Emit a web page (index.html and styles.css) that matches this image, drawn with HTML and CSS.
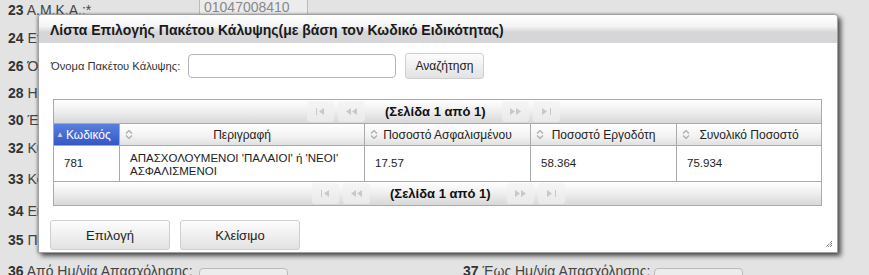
FILE: index.html
```html
<!DOCTYPE html>
<html lang="el">
<head>
    <meta charset="UTF-8">
    <title>Λίστα Επιλογής Πακέτου Κάλυψης</title>
    <link rel="stylesheet" href="styles.css">
</head>
<body>
    <div class="form">
        <div class="row r23"><span class="lbl"><b>23</b> Α.Μ.Κ.Α.:*</span><span class="field filled">01047008410</span></div>
        <div class="row r24"><span class="lbl"><b>24</b> Επώνυμο:</span></div>
        <div class="row r26"><span class="lbl"><b>26</b> Όνομα:</span></div>
        <div class="row r28"><span class="lbl"><b>28</b> Ημ/νία Γέννησης:</span></div>
        <div class="row r30"><span class="lbl"><b>30</b> Έγγραφο:</span></div>
        <div class="row r32"><span class="lbl"><b>32</b> Κύρια Ασφάλιση:</span></div>
        <div class="row r33"><span class="lbl"><b>33</b> Κατηγορία:</span></div>
        <div class="row r34"><span class="lbl"><b>34</b> Ειδικότητα:</span></div>
        <div class="row r35"><span class="lbl"><b>35</b> Πακέτο Κάλυψης:</span></div>
        <div class="row r36">
            <span class="lbl"><b>36</b> Από Ημ/νία Απασχόλησης:</span><span class="field small"></span>
            <span class="lbl second"><b>37</b> Έως Ημ/νία Απασχόλησης:</span><span class="field small"></span>
        </div>
    </div>

    <div class="dialog">
        <div class="dialog-title">Λίστα Επιλογής Πακέτου Κάλυψης(με βάση τον Κωδικό Ειδικότητας)</div>
        <div class="dialog-body">
            <div class="search">
                <label>Όνομα Πακέτου Κάλυψης:</label>
                <input type="text" class="search-input">
                <button class="btn btn-search">Αναζήτηση</button>
            </div>

            <div class="grid">
                <div class="pager top">
                    <span class="pg"><svg width="9" height="7" viewBox="0 0 9 7"><rect x="0" y="0" width="1" height="7" fill="#c8c8c8"/><path d="M8 0 L3 3.5 L8 7Z" fill="#c8c8c8"/></svg></span>
                    <span class="pg"><svg width="11" height="7" viewBox="0 0 11 7"><path d="M5 0 L0 3.5 L5 7Z M11 0 L6 3.5 L11 7Z" fill="#c8c8c8"/></svg></span>
                    <span class="pg-text">(Σελίδα 1 από 1)</span>
                    <span class="pg"><svg width="11" height="7" viewBox="0 0 11 7"><path d="M0 0 L5 3.5 L0 7Z M6 0 L11 3.5 L6 7Z" fill="#c8c8c8"/></svg></span>
                    <span class="pg"><svg width="9" height="7" viewBox="0 0 9 7"><path d="M0 0 L5 3.5 L0 7Z" fill="#c8c8c8"/><rect x="8" y="0" width="1" height="7" fill="#c8c8c8"/></svg></span>
                </div>
                <div class="thead">
                    <div class="th c1 sorted"><span class="tri">▲</span>Κωδικός</div>
                    <div class="th c2"><svg class="sort" width="8" height="11" viewBox="0 0 8 11"><path d="M1 4.5 L4 1.5 L7 4.5 M1 6.5 L4 9.5 L7 6.5" fill="none" stroke="#aaa" stroke-width="1.2"/></svg>Περιγραφή</div>
                    <div class="th c3"><svg class="sort" width="8" height="11" viewBox="0 0 8 11"><path d="M1 4.5 L4 1.5 L7 4.5 M1 6.5 L4 9.5 L7 6.5" fill="none" stroke="#aaa" stroke-width="1.2"/></svg>Ποσοστό Ασφαλισμένου</div>
                    <div class="th c4"><svg class="sort" width="8" height="11" viewBox="0 0 8 11"><path d="M1 4.5 L4 1.5 L7 4.5 M1 6.5 L4 9.5 L7 6.5" fill="none" stroke="#aaa" stroke-width="1.2"/></svg>Ποσοστό Εργοδότη</div>
                    <div class="th c5"><svg class="sort" width="8" height="11" viewBox="0 0 8 11"><path d="M1 4.5 L4 1.5 L7 4.5 M1 6.5 L4 9.5 L7 6.5" fill="none" stroke="#aaa" stroke-width="1.2"/></svg>Συνολικό Ποσοστό</div>
                </div>
                <div class="trow">
                    <div class="td c1">781</div>
                    <div class="td c2">ΑΠΑΣΧΟΛΟΥΜΕΝΟΙ 'ΠΑΛΑΙΟΙ' ή 'ΝΕΟΙ'<br>ΑΣΦΑΛΙΣΜΕΝΟΙ</div>
                    <div class="td c3">17.57</div>
                    <div class="td c4">58.364</div>
                    <div class="td c5">75.934</div>
                </div>
                <div class="pager bottom">
                    <span class="pg"><svg width="9" height="7" viewBox="0 0 9 7"><rect x="0" y="0" width="1" height="7" fill="#c8c8c8"/><path d="M8 0 L3 3.5 L8 7Z" fill="#c8c8c8"/></svg></span>
                    <span class="pg"><svg width="11" height="7" viewBox="0 0 11 7"><path d="M5 0 L0 3.5 L5 7Z M11 0 L6 3.5 L11 7Z" fill="#c8c8c8"/></svg></span>
                    <span class="pg-text">(Σελίδα 1 από 1)</span>
                    <span class="pg"><svg width="11" height="7" viewBox="0 0 11 7"><path d="M0 0 L5 3.5 L0 7Z M6 0 L11 3.5 L6 7Z" fill="#c8c8c8"/></svg></span>
                    <span class="pg"><svg width="9" height="7" viewBox="0 0 9 7"><path d="M0 0 L5 3.5 L0 7Z" fill="#c8c8c8"/><rect x="8" y="0" width="1" height="7" fill="#c8c8c8"/></svg></span>
                </div>
            </div>

            <div class="actions">
                <button class="btn btn-big">Επιλογή</button>
                <button class="btn btn-big">Κλείσιμο</button>
            </div>
        </div>
        <svg class="grip" width="8" height="8" viewBox="0 0 8 8">
            <path d="M7 1 L1 7 M7 3 L3 7 M7 5 L5 7" stroke="#333" stroke-width="1" stroke-dasharray="1 1"/>
        </svg>
    </div>
</body>
</html>
```

FILE: styles.css
```css
body {
    margin: 0;
    background: #e3e3e3;
    font-family: "Liberation Sans", Arial, sans-serif;
    font-size: 12px;
    color: #333;
    overflow: hidden;
    height: 275px;
}

.form {
    padding: 0 8px;
}
.row {
    display: flex;
    align-items: center;
    height: 29px;
    white-space: nowrap;
}
.r23 { height: 20px; }
.r24 { height: 28px; margin-top: 4px; }
.r26 { height: 27px; }
.r28 { height: 27px; }
.r30 { height: 28px; }
.r32 { height: 28px; }
.r33 { height: 34px; }
.r34 { height: 29px; }
.r35 { height: 30px; }
.r36 { height: 31px; }
.lbl {
    width: 191px;
    font-size: 14px;
    color: #444;
}
.lbl b { color: #333; }
.lbl.second { margin-left: 175px; }
.field {
    display: inline-block;
    height: 22px;
    border: 1px solid #bbb;
    border-radius: 4px;
    background: #ececec;
    box-sizing: border-box;
    color: #888;
    font-size: 14px;
    padding: 3px 4px 0;
}
.r23 .field { width: 109px; margin-top: -8px; }
.field.small { width: 89px; margin-top: 16px; }

/* dialog */
.dialog {
    position: absolute;
    left: 38px;
    top: 14px;
    width: 800px;
    height: 239px;
    box-sizing: border-box;
    background: #fff;
    border: 1px solid #a0a0a0;
    border-radius: 4px 4px 0 0;
    box-shadow: 3px 3px 5px rgba(0, 0, 0, 0.65), -1px 0 3px rgba(0, 0, 0, 0.3);
}
.dialog-title {
    height: 28px;
    line-height: 30px;
    padding-left: 11px;
    font-weight: bold;
    font-size: 14px;
    color: #1a1a1a;
    white-space: nowrap;
    background: linear-gradient(#ffffff 0%, #f4f4f4 40%, #d6d6d8 62%, #d6d6d8 100%);
    border-radius: 3px 3px 0 0;
}
.dialog-body {
    padding: 10px 15px 0 11px;
}
.search {
    display: flex;
    align-items: center;
    height: 26px;
    padding-left: 1px;
}
.search label {
    width: 137px;
    flex-shrink: 0;
    font-size: 11.2px;
    color: #333;
    white-space: nowrap;
}
.search-input {
    width: 208px;
    height: 24px;
    box-sizing: border-box;
    border: 1px solid #b4b4b4;
    border-radius: 4px;
    margin: 0;
}
.btn {
    font-family: "Liberation Sans", Arial, sans-serif;
    color: #222;
    background: linear-gradient(#fdfdfd, #e2e2e2);
    border: 1px solid #cfcfcf;
    border-radius: 3px;
    cursor: pointer;
    padding: 0;
}
.btn-search {
    width: 79px;
    height: 26px;
    margin-left: 9px;
    font-size: 12px;
}

/* grid */
.grid {
    margin: 20px 0 0 3px;
    width: 769px;
    border: 1px solid #aaa;
    box-sizing: border-box;
}
.pager {
    display: flex;
    align-items: center;
    height: 23px;
    background: linear-gradient(#ffffff, #f0f0f0 45%, #d8d8d8);
}
.pager.top { padding-left: 253px; border-bottom: 1px solid #aaa; }
.pager.bottom { padding-left: 258px; }
.pg {
    width: 27px;
    height: 21px;
    margin-right: 4px;
    display: flex;
    align-items: center;
    justify-content: center;
    background: linear-gradient(#f6f6f6, #e9e9e9);
    border-radius: 3px;
}
.pg-text {
    font-weight: bold;
    font-size: 13px;
    color: #111;
    white-space: nowrap;
    padding: 0 16px;
}
.thead, .trow {
    display: flex;
}
.thead {
    height: 21px;
    border-bottom: 1px solid #aaa;
    background: linear-gradient(#ffffff, #f2f2f2 60%, #e0e0e0);
}
.trow {
    height: 35px;
    border-bottom: 1px solid #aaa;
}
.c1 { width: 66px; }
.c2 { width: 245px; }
.c3 { width: 166px; }
.c4 { width: 146px; }
.c5 { flex: 1; border-right: none !important; }
.th {
    position: relative;
    display: flex;
    align-items: center;
    justify-content: center;
    border-right: 1px solid #aaa;
    box-sizing: border-box;
    font-size: 12px;
    color: #222;
    white-space: nowrap;
}
.th .sort {
    position: absolute;
    left: 5px;
    top: 5px;
}
.th.sorted {
    justify-content: flex-start;
    color: #fff;
    background: linear-gradient(#5a7fe0, #3358c4);
    padding-left: 2px;
}
.tri {
    font-size: 8px;
    color: #ccd;
    margin-right: 2px;
}
.td {
    display: flex;
    align-items: center;
    border-right: 1px solid #aaa;
    box-sizing: border-box;
    padding-left: 10px;
    font-size: 11.5px;
    color: #222;
    line-height: 13px;
}
.td.c2 { align-items: flex-start; padding-top: 6px; }

/* buttons */
.actions {
    display: flex;
    gap: 10px;
    margin-top: 14px;
}
.btn-big {
    width: 120px;
    height: 30px;
    font-size: 13px;
}
.grip {
    position: absolute;
    right: 4px;
    bottom: 4px;
}
```
